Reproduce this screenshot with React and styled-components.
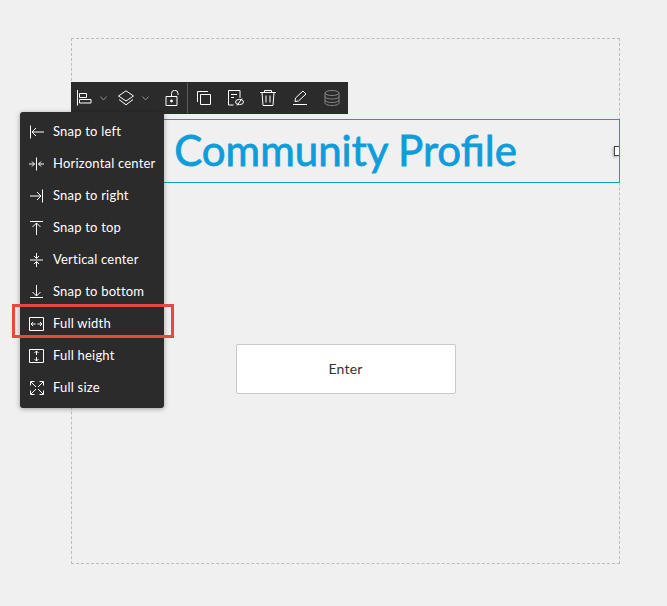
import styled, { createGlobalStyle } from "styled-components"

const GlobalStyle = createGlobalStyle`
    html, body {
        margin: 0;
        padding: 0;
        background: #f0f0f0;
        font-family: "Lato", "Open Sans", sans-serif;
    }
`

const Svg = ({ children, fill = 'none' }) => (
    <svg width="16" height="16" viewBox="0 0 16 16" fill={fill} stroke="currentColor" strokeWidth="1">
        {children}
    </svg>
)

const menuItems = [
    { label: 'Snap to left', icon: <path d="M1.5 1.5V14.5M15 8H3M7 4L3 8L7 12" /> },
    { label: 'Horizontal center', icon: <path d="M7.5 1.5V14.5M0 8H5.5M3 5.5L5.5 8L3 10.5M15 8H9.5M12 5.5L9.5 8L12 10.5" /> },
    { label: 'Snap to right', icon: <path d="M13.5 1.5V14.5M1 8H12M8 4L12 8L8 12" /> },
    { label: 'Snap to top', icon: <path d="M1 1.5H14M7.5 15V3M3.5 7L7.5 3L11.5 7" /> },
    { label: 'Vertical center', icon: <path d="M1 8H14M7.5 1V6.5M5 4L7.5 6.5L10 4M7.5 15V9.5M5 12L7.5 9.5L10 12" /> },
    { label: 'Snap to bottom', icon: <path d="M1 13.5H14M7.5 1V12M3.5 8L7.5 12L11.5 8" /> },
    { label: 'Full width', icon: <path d="M.5 1.5H14.5V14.5H.5ZM2 8H6.5M4 6L2 8L4 10M13 8H8.5M11 6L13 8L11 10" />, marked: true },
    { label: 'Full height', icon: <path d="M.5 1.5H14.5V14.5H.5ZM7.5 3V7M5.5 5L7.5 3L9.5 5M7.5 13V9M5.5 11L7.5 13L9.5 11" /> },
    { label: 'Full size', icon: <path d="M2 2L7 7M14 2L9 7M2 14L7 9M14 14L9 9M1.5 5.5V1.5H5.5M10.5 1.5H14.5V5.5M1.5 10.5V14.5H5.5M10.5 14.5H14.5V10.5" /> },
]

export default function App() {
    return (
        <Page>
            <GlobalStyle />
            <Canvas>
                <Toolbar>
                    <Tool $w={26}>
                        <Svg><path d="M1.5 0V15.5M3.5 3.5H10.5V7.5H3.5ZM3.5 9.5H15V13H3.5Z" /></Svg>
                    </Tool>
                    <Chevron $w={13}>
                        <svg width="7" height="5" viewBox="0 0 7 5" fill="none" stroke="currentColor"><path d="M.5 .5L3.5 4L6.5 .5" /></svg>
                    </Chevron>
                    <Tool $w={32}>
                        <Svg><path d="M8 .8L15.5 6L8 11L.5 6ZM1 9.5L8 14.8L15 9.5" /></Svg>
                    </Tool>
                    <Chevron $w={7}>
                        <svg width="7" height="5" viewBox="0 0 7 5" fill="none" stroke="currentColor"><path d="M.5 .5L3.5 4L6.5 .5" /></svg>
                    </Chevron>
                    <Tool $w={31} $ml={7}>
                        <Svg>
                            <path d="M2 6.5H13V15.5H2ZM7.5 6.5V3.5A3.2 3.2 0 0 1 14 3.5V5" />
                            <circle cx="7.5" cy="11" r="1" fill="currentColor" />
                        </Svg>
                    </Tool>
                    <Divider />
                    <Tool>
                        <Svg><path d="M4.5 4.5H14.5V14.5H4.5ZM1.5 12V1.5H12" /></Svg>
                    </Tool>
                    <Tool>
                        <Svg>
                            <path d="M5.5 15H.5V.5H12V8M3 4.5H9M3 7.5H6" />
                            <ellipse cx="11.5" cy="12" rx="4" ry="2.6" />
                            <path d="M9 15.5L14 8.5" />
                        </Svg>
                    </Tool>
                    <Tool>
                        <Svg><path d="M0 2.5H16M4.5 2.5V.5H11.5V2.5M2 2.5L3 15.5H13L14 2.5M6 5.5V12.5M10 5.5V12.5" /></Svg>
                    </Tool>
                    <Tool>
                        <Svg><path d="M3 11.5L3.5 8L11 1L14 4L6.5 11ZM1 14.5H15" /></Svg>
                    </Tool>
                    <Tool $muted>
                        <Svg>
                            <ellipse cx="8" cy="3" rx="7" ry="2.5" />
                            <path d="M1 3V13C1 14.4 4 15.5 8 15.5S15 14.4 15 13V3M1 6.5C1 7.9 4 9 8 9S15 7.9 15 6.5M1 10C1 11.4 4 12.5 8 12.5S15 11.4 15 10" />
                        </Svg>
                    </Tool>
                </Toolbar>

                <Menu>
                    {menuItems.map((item) => (
                        <MenuRow key={item.label}>
                            <Svg>{item.icon}</Svg>
                            <MenuLabel>{item.label}</MenuLabel>
                            {item.marked && <Marker />}
                        </MenuRow>
                    ))}
                </Menu>

                <TitleBox>
                    <Title>Community Profile</Title>
                    <Handle />
                </TitleBox>
                <EnterButton>Enter</EnterButton>
            </Canvas>
        </Page>
    );
}

const Page = styled.div`
    width: 667px;
    height: 606px;
    padding: 38px 0 0 71px;
    box-sizing: border-box;
    overflow: hidden;
`

const Canvas = styled.div`
    position: relative;
    width: 549px;
    height: 526px;
    box-sizing: border-box;
    border: 1px dashed #bdbdbd;
    display: flex;
    flex-direction: column;
    align-items: center;
`

const Toolbar = styled.div`
    position: absolute;
    left: -1px;
    top: 43px;
    width: 277px;
    height: 32px;
    background: #2b2b2b;
    display: flex;
    align-items: center;
    z-index: 2;
`

const Tool = styled.div`
    width: ${(p) => p.$w || 32}px;
    margin-left: ${(p) => p.$ml || 0}px;
    height: 32px;
    display: flex;
    align-items: center;
    justify-content: center;
    flex-shrink: 0;
    color: ${(p) => (p.$muted ? '#858585' : '#ffffff')};
`

const Chevron = styled(Tool)`
    color: #8c8c8c;
`

const Divider = styled.div`
    width: 1px;
    height: 30px;
    background: #5c5c5c;
    flex-shrink: 0;
`

const Menu = styled.div`
    position: absolute;
    left: -52px;
    top: 73px;
    width: 144px;
    height: 296px;
    box-sizing: border-box;
    padding: 4px 0;
    background: #2b2b2b;
    border-radius: 3px;
    box-shadow: 0 1px 5px rgba(0, 0, 0, 0.35);
    z-index: 3;
`

const MenuRow = styled.div`
    position: relative;
    height: 32px;
    padding-left: 9px;
    display: flex;
    align-items: center;
    gap: 8px;
    color: #ffffff;
    font-size: 13px;
`

const MenuLabel = styled.span`
    letter-spacing: 0.2px;
    margin-top: -2px;
`

const Marker = styled.div`
    position: absolute;
    left: -8px;
    top: -4px;
    width: 162px;
    height: 34px;
    box-sizing: border-box;
    border: 3px solid #e8493f;
`

const TitleBox = styled.div`
    position: relative;
    align-self: stretch;
    margin: 80px -1px 0;
    height: 64px;
    box-sizing: border-box;
    border: 1px solid #06a5bd;
    display: flex;
    align-items: center;
    justify-content: center;
`

const Title = styled.h1`
    margin: 0 0 2px;
    font-size: 42px;
    font-weight: 400;
    -webkit-text-stroke: 0.8px #0d9ddb;
    color: #0d9ddb;
`

const Handle = styled.div`
    position: absolute;
    right: 0;
    top: 26px;
    width: 5px;
    height: 10px;
    box-sizing: border-box;
    background: #ffffff;
    border: 1px solid #444444;
    border-right: none;
    box-shadow: -1px 1px 3px rgba(0, 0, 0, 0.3);
`

const EnterButton = styled.div`
    margin-top: 161px;
    padding-bottom: 2px;
    width: 220px;
    height: 50px;
    box-sizing: border-box;
    background: #ffffff;
    border: 1px solid #c8c8c8;
    border-radius: 2px;
    display: flex;
    align-items: center;
    justify-content: center;
    font-size: 14px;
    letter-spacing: 0.2px;
    color: #333333;
`
